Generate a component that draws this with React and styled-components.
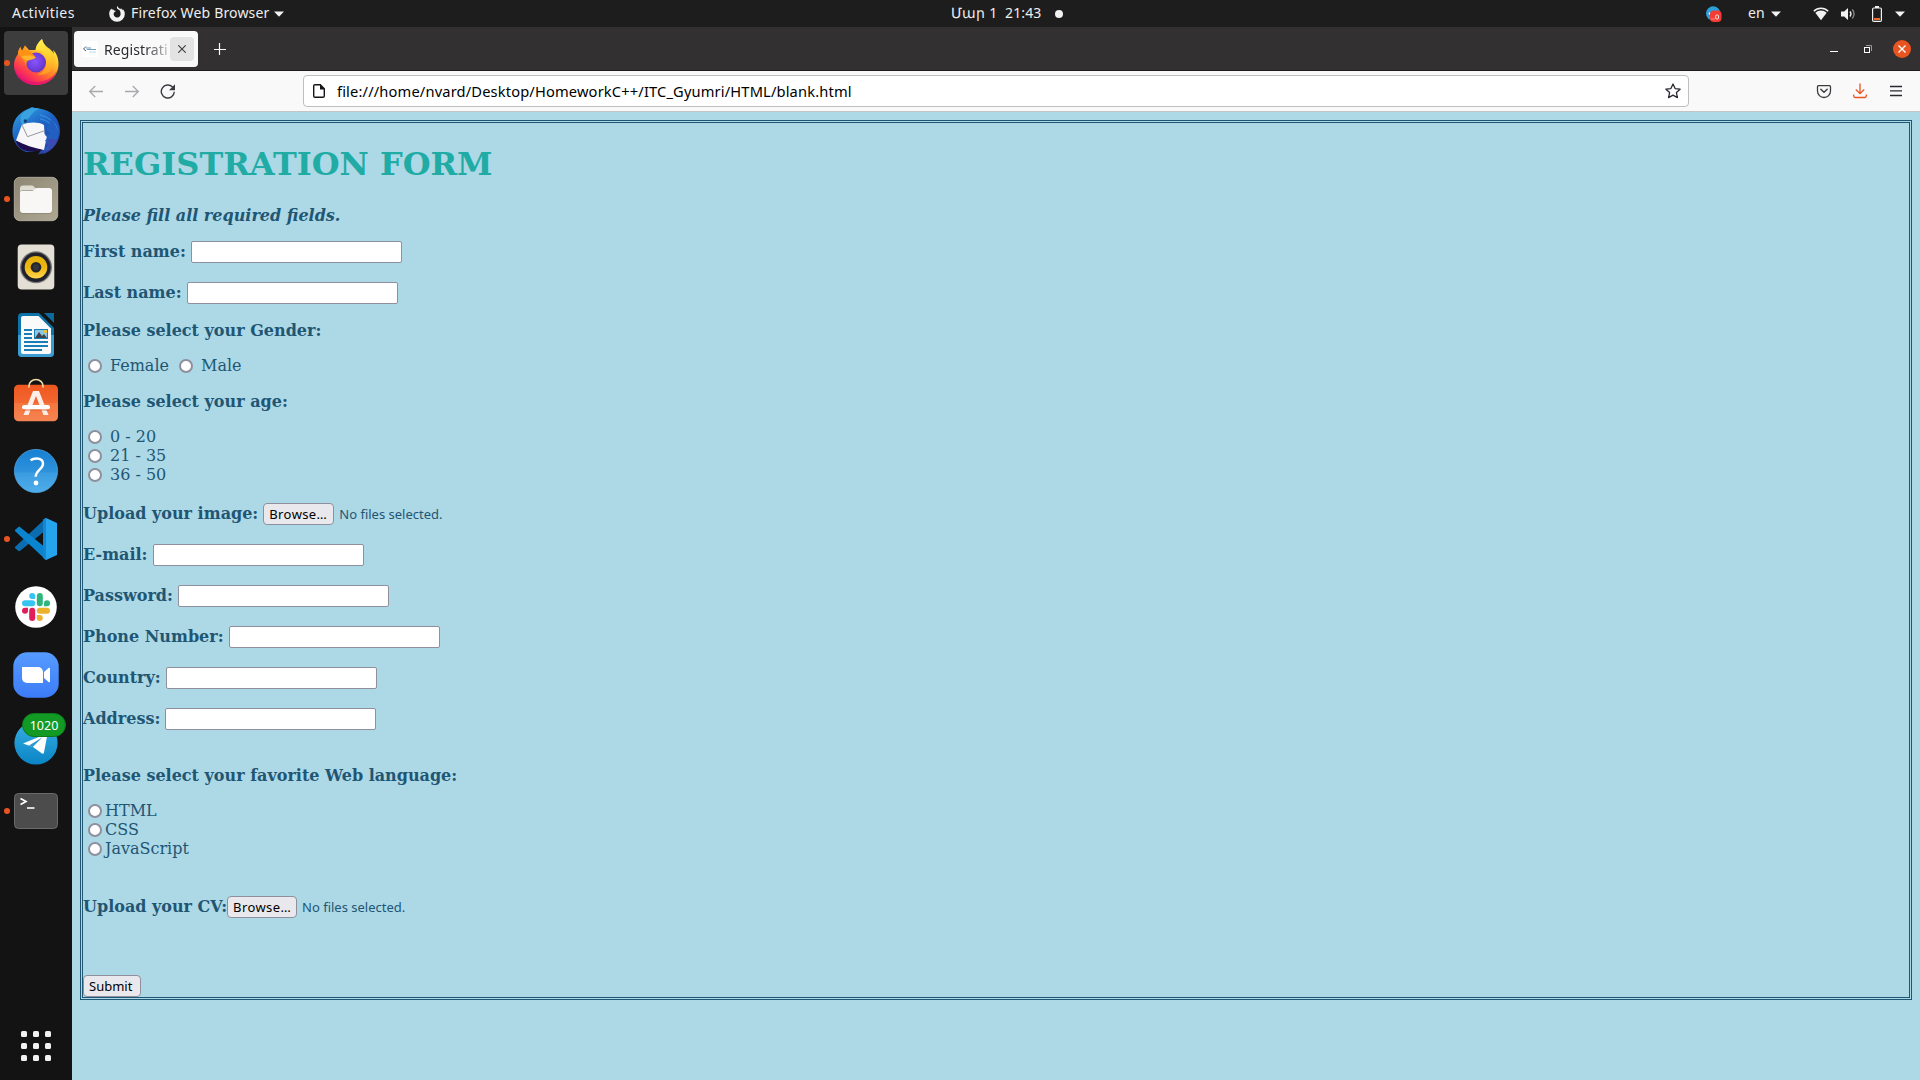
import React from "react";
import styled, { createGlobalStyle } from "styled-components";

const ui = `"Noto Sans", "Open Sans", sans-serif`;
const serif = `"DejaVu Serif", serif`;
const ink = "#1f5673";

const Global = createGlobalStyle`
  *, *::before, *::after { box-sizing: border-box; }
  body { margin: 0; overflow: hidden; background: #add8e6; }
  svg { display: block; flex: none; }
`;

const Desktop = styled.div`
  width: 1920px;
  height: 1080px;
  display: flex;
  flex-direction: column;
  overflow: hidden;
  font-family: ${ui};
`;

const Label = styled.span`
  font-size: ${(p) => p.$size || 14}px;
  letter-spacing: ${(p) => p.$track || 0}px;
  color: ${(p) => p.$color || "#eeeeee"};
  line-height: 20px;
  white-space: pre;
`;

/* ---------- top panel ---------- */
const Panel = styled.header`
  height: 27px;
  flex: none;
  display: grid;
  grid-template-columns: 951px 1fr auto;
  align-items: center;
  background: #1d1d1d;
  ${Label} { padding-bottom: 1px; }
`;
const PanelLeft = styled.div`
  display: flex;
  align-items: center;
  padding-left: 12px;
`;
const ActivitiesSlot = styled.div`
  width: 97px;
  display: flex;
`;
const AppName = styled.div`
  width: 149px;
  padding-left: 6px;
  display: flex;
`;
const PanelClock = styled.div`
  display: flex;
  align-items: center;
`;
const ClockSlot = styled.div`
  width: 104px;
  display: flex;
`;
const NoticeDot = styled.i`
  width: 8px;
  height: 8px;
  border-radius: 50%;
  background: #f2f2f2;
`;
const PanelRight = styled.div`
  display: flex;
  align-items: center;
  padding-right: 15px;
`;
const LangSlot = styled.div`
  width: 23px;
  margin-left: 26px;
  display: flex;
`;
const Slot = styled.div`
  margin-left: ${(p) => p.$left}px;
`;

/* ---------- dock ---------- */
const Workspace = styled.div`
  flex: 1;
  min-height: 0;
  display: flex;
`;
const Dock = styled.nav`
  width: 72px;
  flex: none;
  padding: 4px 4px 2px;
  display: flex;
  flex-direction: column;
  gap: 4px;
  background: #131313;
`;
const DockItem = styled.div`
  position: relative;
  height: 64px;
  display: flex;
  align-items: center;
  justify-content: center;
  border-radius: 4px;
  background: ${(p) => (p.$active ? "#3d3d3d" : "transparent")};
  margin-top: ${(p) => (p.$last ? "auto" : 0)};
  svg { overflow: visible; }
`;
const RunningDot = styled.i`
  position: absolute;
  left: 0;
  top: 29px;
  width: 6px;
  height: 6px;
  border-radius: 50%;
  background: #e95420;
`;
const Badge = styled.span`
  position: absolute;
  left: 18px;
  top: 2px;
  width: 44px;
  height: 24px;
  border-radius: 12px;
  background: #129a24;
  border: 1px solid #0c7a1a;
  color: #fff;
  font-size: 12.5px;
  line-height: 23px;
  text-align: center;
`;

/* ---------- browser window ---------- */
const Browser = styled.main`
  flex: 1;
  min-width: 0;
  display: flex;
  flex-direction: column;
`;
const TabStrip = styled.div`
  height: 44px;
  flex: none;
  display: flex;
  align-items: flex-start;
  padding: 4px 9px 0 2px;
  background: #323031;
  border-bottom: 1px solid #1c1b1c;
`;
const Tab = styled.div`
  width: 124px;
  height: 36px;
  padding: 0 4px 0 8px;
  display: flex;
  align-items: center;
  border-radius: 4px;
  background: #f9f9fa;
`;
const TabTitle = styled.div`
  width: 66px;
  margin-left: 6px;
  margin-top: 1px;
  display: flex;
  mask-image: linear-gradient(to right, #000 40px, transparent 72px);
`;
const TabClose = styled.button`
  width: 24px;
  height: 24px;
  padding: 0;
  border: 0;
  border-radius: 4px;
  display: grid;
  place-items: center;
  background: #e3e3e4;
`;
const NewTab = styled.div`
  margin: 12px auto 0 16px;
`;
const WindowControls = styled.div`
  height: 36px;
  display: flex;
  align-items: center;
`;
const Toolbar = styled.div`
  height: 41px;
  flex: none;
  display: flex;
  align-items: center;
  background: #f9f9fa;
  border-bottom: 1px solid #c4c4c6;
  padding: 0 16px;
`;
const NavButtons = styled.div`
  width: 215px;
  display: flex;
  align-items: center;
  gap: 20px;
`;
const UrlBar = styled.div`
  width: 1386px;
  height: 32px;
  display: flex;
  align-items: center;
  padding: 0 7px 0 7px;
  background: #fff;
  border: 1px solid #bebec0;
  border-radius: 4px;
`;
const UrlText = styled.div`
  flex: 1;
  display: flex;
  padding-left: 10px;
`;
const ToolActions = styled.div`
  margin-left: auto;
  display: flex;
  align-items: center;
  gap: 20px;
`;

/* ---------- page ---------- */
const Page = styled.section`
  flex: 1;
  padding: 10px;
  background: #add8e6;
`;
const Form = styled.form`
  height: 876px;
  display: flex;
  flex-direction: column;
  align-items: flex-start;
  border: 1px solid ${ink};
  outline: 1px solid ${ink};
  outline-offset: 1px;
  color: ${ink};
  font: 16px/19px ${serif};
`;
const Title = styled.h1`
  margin: 22px 0 0;
  font-size: 32px;
  line-height: 38px;
  color: #20aca5;
`;
const Note = styled.p`
  margin: 23px 0 0;
  font-weight: bold;
  font-style: italic;
`;
const Question = styled.p`
  margin: ${(p) => p.$top || 17}px 0 0;
  font-weight: bold;
`;
const Field = styled.label`
  display: flex;
  align-items: flex-start;
  height: 22px;
  margin-top: ${(p) => p.$top || 19}px;
`;
const FieldName = styled.span`
  margin: 1px ${(p) => (p.$tight ? 0 : 5)}px 0 0;
  font-weight: bold;
  white-space: nowrap;
`;
const TextBox = styled.input`
  width: 211px;
  height: 22px;
  margin: 0;
  border: 1px solid #8f8f9d;
  border-radius: 2px;
  background: #fff;
`;
const PushButton = styled.button`
  width: ${(p) => p.$width}px;
  height: 22px;
  margin: ${(p) => p.$top || 0}px 0 0;
  padding: 0 0 0 5px;
  text-align: left;
  border: 1px solid #8f8f9d;
  border-radius: 4px;
  background: #e9e9ed;
  color: #000;
  font: 13px/20px ${ui};
  letter-spacing: ${(p) => p.$track || 0}px;
  white-space: nowrap;
`;
const FileState = styled.span`
  margin-left: 5px;
  font: 13px/22px ${ui};
`;
const Options = styled.div`
  margin-top: 16px;
  display: flex;
  flex-direction: ${(p) => (p.$inline ? "row" : "column")};
  gap: ${(p) => (p.$inline ? 5 : 0)}px;
`;
const Option = styled.label`
  display: flex;
  height: 19px;
  gap: ${(p) => (p.$tight ? 3 : 8)}px;
`;
const Radio = styled.input`
  appearance: none;
  width: 14px;
  height: 14px;
  margin: 3px 0 0 5px;
  border: 2px solid #8f8f9d;
  border-radius: 50%;
  background: #fff;
`;

/* ---------- icons ---------- */
const Caret = () => (
  <svg width="10" height="6" viewBox="0 0 10 6"><path d="M0 0.5h10L5 5.7z" fill="#f2f2f2" /></svg>
);
const Icon48 = ({ children }) => <svg width="48" height="48" viewBox="0 0 48 48">{children}</svg>;

const FirefoxIcon = () => (
  <Icon48>
    <defs>
      <linearGradient id="ffBody" x1="0.85" y1="0.1" x2="0.25" y2="0.95">
        <stop offset="0" stopColor="#fff44f" /><stop offset="0.3" stopColor="#ffc02b" />
        <stop offset="0.55" stopColor="#ff8027" /><stop offset="0.8" stopColor="#ff3b4f" /><stop offset="1" stopColor="#e4127a" />
      </linearGradient>
      <radialGradient id="ffCore" cx="0.45" cy="0.45" r="0.6">
        <stop offset="0" stopColor="#8a55fb" /><stop offset="0.6" stopColor="#7040e0" /><stop offset="1" stopColor="#6a2fb4" />
      </radialGradient>
      <linearGradient id="ffFlame" x1="0.4" y1="0" x2="0.6" y2="1">
        <stop offset="0" stopColor="#fff44f" /><stop offset="0.5" stopColor="#ffd02f" /><stop offset="1" stopColor="#ff9a1f" />
      </linearGradient>
    </defs>
    <path d="M30 0c-4 3-6 7-6.500 11H17l-4-4.500L10 12 8.300 8C7 10 6 13 6 15c-2.500 3-4 7-4 11 0 11.500 9.500 20 22 20s22.500-9 22.500-21c0-6-2-11-5.500-14l1 4c-2-3-4-4-6.500-6C33 6.500 31 4 30 0z" fill="url(#ffBody)" />
    <circle cx="24" cy="23.500" r="10" fill="url(#ffCore)" />
    <path d="M30 0c-4 4-7 8-6 12 3-1 6 0 8 1.500l-2 .5c3 2 4.500 5 4.500 9 0 7-4 11-9 12.500 11 2 18-6 16-17 1.500 1 2 3 2.200 5C43 15 40 11 36.500 9 33 6.500 31 4.500 30 0z" fill="url(#ffFlame)" opacity=".85" />
    <path d="M13 6.500 12.500 11l5 1c3 2 5 5 6 6-1 2-4 2.500-7 3-2 2-2.500 3-2 6-2-4-4-9-8.500-12 0-3 1-5 2.300-7L10 12z" fill="#ff9215" />
    <path d="M9 18c5-2 10-2 15 .5-2 1.800-5 1.800-7.500 3-3 0-5-2-7.500-3.500z" fill="#ffb52c" />
    <path d="M3 31c4 8 11 12 21 12 9 0 17-4 20.500-11C42 41 34 46 24 46 14 46 6 40 3 31z" fill="#e3136f" opacity=".75" />
  </Icon48>
);
const ThunderbirdIcon = () => (
  <Icon48>
    <defs>
      <linearGradient id="tbBody" x1="0.2" y1="0" x2="0.8" y2="1">
        <stop offset="0" stopColor="#2f9fe0" /><stop offset="0.45" stopColor="#1d5fc4" /><stop offset="1" stopColor="#2c3f9e" />
      </linearGradient>
    </defs>
    <path d="M20 0c2 1 4 1.200 7 1.500C40 3 48 12 48 24c0 11-7 20-18 23.500l2-1.500-6 1.500 3-4L14 45C8 43 4 38 2 33-1.500 23 1 12 9 6 12 3.500 16 2 20 0z" fill="url(#tbBody)" />
    <path d="M3.500 33c8 3 16 6 28 9l-3 2-13 0C9 43 5 39 3.500 33z" fill="#1f0c4d" />
    <path d="M10 17.500c7-2.500 16-3 22 .5l.5 9 2.500 2-3 14C22 41 12 38 4 33.500z" fill="#f7f7f9" />
    <path d="M10 18l5.500 11.700L33 23.500" fill="none" stroke="#8c8c92" strokeWidth=".9" />
    <path d="M10 7c6-6 12-7 18-5-3 0-6 2-9 6-2 4-5 4-8 10-3-2-3-8-1-11z" fill="#3aa2df" />
    <circle cx="13.300" cy="14" r="1.700" fill="#124078" />
    <path d="M28 12c8 1 14 7 15 14M28 8c9 2 16 8 18 16" fill="none" stroke="#3d9ae4" strokeWidth="1.600" opacity=".6" />
    <path d="M34 22l4 5-5 1 4 4-4 1 3 5-4 6c8-3 14-10 15-19L40 12z" fill="#215fc0" />
    <path d="M37 32l-3 4h4l-4 4 5-1-7 6c8-2 12-7 13-13z" fill="#3c4bb4" />
  </Icon48>
);
const FilesIcon = () => (
  <Icon48>
    <defs><linearGradient id="fm" x1="0" y1="0" x2="1" y2="1"><stop offset="0" stopColor="#8d8672" /><stop offset=".5" stopColor="#9d9783" /><stop offset="1" stopColor="#aea893" /></linearGradient></defs>
    <rect x="2.300" y="2.300" width="43.400" height="43.400" rx="5.500" fill="url(#fm)" stroke="#bdb8a8" strokeWidth=".8" />
    <path d="M8 13.500a3 3 0 0 1 3-3h9c2 0 2.500 3 4.500 3h12l-10 5H8z" fill="#dfdcd1" />
    <rect x="8" y="15" width="32" height="24" rx="3" fill="#7b7564" opacity=".5" />
    <path d="M8 18c0-1.500 1-2 2.500-2H20c2 0 3-3 5-3h12a3 3 0 0 1 3 3v19a3 3 0 0 1-3 3H11a3 3 0 0 1-3-3z" fill="#f8f7f5" />
  </Icon48>
);
const RhythmboxIcon = () => (
  <Icon48>
    <defs><linearGradient id="rb" x1="0" y1="0" x2="0" y2="1"><stop offset="0" stopColor="#e3b10c" /><stop offset=".5" stopColor="#eeb710" /><stop offset="1" stopColor="#ffd64e" /></linearGradient></defs>
    <rect x="5.700" y="1.500" width="36.600" height="45" rx="4" fill="#e4dfd5" />
    <circle cx="24" cy="24.300" r="16" fill="#7d7b79" />
    <circle cx="24" cy="24.300" r="14.700" fill="#20212b" />
    <circle cx="24" cy="24.300" r="11.300" fill="url(#rb)" />
    <circle cx="24" cy="24.300" r="5.300" fill="#24262a" />
    <circle cx="24" cy="24.300" r="3" fill="#33363b" />
  </Icon48>
);
const WriterIcon = () => (
  <Icon48>
    <path d="M10 2h17l15 15v25a4 4 0 0 1-4 4H10a4 4 0 0 1-4-4V6a4 4 0 0 1 4-4z" fill="#0d73a9" />
    <path d="M6 24h36v18a4 4 0 0 1-4 4H10a4 4 0 0 1-4-4z" fill="#3c9bd0" />
    <path d="M32 2h10v10z" fill="#0c699b" />
    <path d="M11 5h15.500L39 17.500V41a2 2 0 0 1-2 2H11a2 2 0 0 1-2-2V7a2 2 0 0 1 2-2z" fill="#fafafa" />
    <path d="M12 19h8M12 23h8M12 27h8M12 31h24M12 35h24M12 39h18" stroke="#187eb5" strokeWidth="2" />
    <rect x="22.500" y="18.500" width="13" height="9" fill="#8ec5e4" stroke="#187eb5" />
    <path d="M23 27l4-6 3 4 2-2 3 4z" fill="#3e4347" /><circle cx="33.500" cy="20.500" r="1.700" fill="#f2c51d" />
  </Icon48>
);
const SoftwareIcon = () => (
  <Icon48>
    <defs><linearGradient id="sw" x1="0" y1="0" x2="0" y2="1"><stop offset="0" stopColor="#ee571f" /><stop offset=".49" stopColor="#f26730" /><stop offset=".5" stopColor="#f5753d" /><stop offset="1" stopColor="#f58452" /></linearGradient></defs>
    <rect x="2" y="5.700" width="44" height="36.600" rx="4.500" fill="url(#sw)" />
    <path d="M17 8V7a7 6.500 0 0 1 14 0v1" fill="none" stroke="#f4dcaa" strokeWidth="1.600" strokeLinecap="round" />
    <path d="M21 12h6l9.500 24h-5L24 17l-7.500 19h-5z" fill="#fbeee8" />
    <rect x="10" y="26" width="28" height="4.500" rx="2.200" fill="#fff" />
    <path d="M11 31h26" stroke="#dd5420" strokeWidth=".8" />
  </Icon48>
);
const HelpIcon = () => (
  <Icon48>
    <defs><linearGradient id="hp" x1="0" y1="0" x2="0" y2="1"><stop offset="0" stopColor="#1780d3" /><stop offset=".53" stopColor="#2f92dc" /><stop offset=".54" stopColor="#3a9ce1" /><stop offset="1" stopColor="#4fade9" /></linearGradient></defs>
    <circle cx="24" cy="24" r="21.600" fill="url(#hp)" stroke="#4ba4e2" strokeWidth=".8" />
    <path d="M18.500 13.300c2-1.500 4-1.800 6-1.800 4 0 6.500 2 6.500 5.300 0 5.700-7.300 6.200-7.300 13" fill="none" stroke="#fff" strokeWidth="2.400" />
    <circle cx="24" cy="36" r="2.400" fill="#fff" />
  </Icon48>
);
const CodeIcon = () => (
  <Icon48>
    <path d="M34 3 3.500 31.500c-.7.700-.7 1.500 0 2l2.700 2.300c.7.500 1.400.5 2 0L34 15z" fill="#0b6db0" />
    <path d="M34 45 3.500 16.500c-.7-.7-.7-1.500 0-2l2.700-2.300c.7-.5 1.400-.5 2 0L34 33z" fill="#0a84cf" />
    <path d="M33.500 2.800 45 8v32l-11.500 5.200z" fill="#25a5ee" />
    <path d="M31 4.500 34 2.800V45.200L31 43V8z" fill="#1587d2" />
  </Icon48>
);
const SlackIcon = () => (
  <Icon48>
    <circle cx="24" cy="24" r="20.800" fill="#fff" />
    <g fill="#36c5f0"><path d="M20.200 10a3 3 0 0 1 3 3v3h-3a3 3 0 0 1 0-6z" /><rect x="10" y="17.200" width="13.200" height="6" rx="3" /></g>
    <g fill="#2eb67d"><path d="M38 20.200a3 3 0 0 1-3 3h-3v-3a3 3 0 0 1 6 0z" /><rect x="24.800" y="10" width="6" height="13.200" rx="3" /></g>
    <g fill="#ecb22e"><path d="M27.800 38a3 3 0 0 1-3-3v-3h3a3 3 0 0 1 0 6z" /><rect x="24.800" y="24.800" width="13.200" height="6" rx="3" /></g>
    <g fill="#e01e5a"><path d="M10 27.800a3 3 0 0 1 3-3h3v3a3 3 0 0 1-6 0z" /><rect x="17.200" y="24.800" width="6" height="13.200" rx="3" /></g>
  </Icon48>
);
const ZoomIcon = () => (
  <Icon48>
    <defs><linearGradient id="zm" x1="0" y1="0" x2="0" y2="1"><stop offset="0" stopColor="#569bff" /><stop offset="1" stopColor="#3c7cf8" /></linearGradient></defs>
    <rect x="1.300" y="1.300" width="45.400" height="45.400" rx="14" fill="url(#zm)" />
    <path d="M10 16h16a5 5 0 0 1 5 5v11H15a5 5 0 0 1-5-5z" fill="#fff" />
    <path d="M32 21l4.500-4c.8-.6 1.500-.4 1.500.7v12.600c0 1.100-.7 1.300-1.500.7L32 27z" fill="#fff" />
  </Icon48>
);
const TelegramIcon = () => (
  <Icon48>
    <defs><linearGradient id="tg" x1="0" y1="0" x2="0" y2="1"><stop offset="0" stopColor="#37aee2" /><stop offset="1" stopColor="#0b84c6" /></linearGradient></defs>
    <circle cx="24" cy="24" r="21.600" fill="url(#tg)" />
    <path d="M11 24.500 34 15c1-.4 1.500 0 1.200 1.500L32 33.500c-.3 1.300-1 1.600-2 1l-9-6.500-4.500-1.500z" fill="#fff" />
    <path d="M17 26.500l13.500-8.300-10 10z" fill="#2b9bd4" />
  </Icon48>
);
const TerminalIcon = () => (
  <Icon48>
    <rect x="2.500" y="6.500" width="43" height="35" rx="4" fill="#4c4c4c" stroke="#6a6a6a" />
    <path d="M8.500 11.500l5.500 3-5.500 3" fill="none" stroke="#fff" strokeWidth="1.700" />
    <path d="M15 21h7.500" stroke="#fff" strokeWidth="1.600" />
  </Icon48>
);
const AppsIcon = () => (
  <svg width="30" height="30" viewBox="0 0 30 30" fill="#f2f2f2">
    {[0, 12, 24].map((y) => [0, 12, 24].map((x) => <rect key={`${x}-${y}`} x={x} y={y} width="6" height="6" rx="1.500" />))}
  </svg>
);

const dock = [
  { Icon: FirefoxIcon, running: true, active: true },
  { Icon: ThunderbirdIcon },
  { Icon: FilesIcon, running: true },
  { Icon: RhythmboxIcon },
  { Icon: WriterIcon },
  { Icon: SoftwareIcon },
  { Icon: HelpIcon },
  { Icon: CodeIcon, running: true },
  { Icon: SlackIcon },
  { Icon: ZoomIcon },
  { Icon: TelegramIcon, badge: "1020" },
  { Icon: TerminalIcon, running: true },
];

const TopPanel = () => (
  <Panel>
    <PanelLeft>
      <ActivitiesSlot><Label $track={0.45}>Activities</Label></ActivitiesSlot>
      <svg width="16" height="16" viewBox="0 0 16 16">
        <path d="M8.500 0c-.8 1-.8 2 0 3 2 .7 3 2 3 4A3.500 3.500 0 1 1 5 6.500L7 5 5 4.500 4 3 3 4 2.500 2.500C.8 4 .2 6 .2 8a7.800 7.800 0 0 0 15.600 0c0-2-.6-3.500-2-5l-.3 1.500L12 2l-.5 1.200C10 2.500 9 1.500 8.500 0z" fill="#f2f2f2" />
      </svg>
      <AppName><Label $track={0.16}>Firefox Web Browser</Label></AppName>
      <Caret />
    </PanelLeft>
    <PanelClock>
      <ClockSlot><Label $track={0.15}>{"Մար 1  21:43"}</Label></ClockSlot>
      <NoticeDot />
    </PanelClock>
    <PanelRight>
      <svg width="16" height="16" viewBox="0 0 16 16">
        <circle cx="7.200" cy="7.500" r="7.200" fill="#2ca0da" />
        <circle cx="3.500" cy="7.500" r=".9" fill="#fff" />
        <rect x="4" y="4.500" width="11.500" height="11.500" rx="4" fill="#f23c34" />
        <path d="M5.500 13h1M7.500 13h1" stroke="#fff" strokeWidth=".8" />
        <rect x="9.700" y="9" width="2.800" height="4" rx="1" fill="none" stroke="#fff" strokeWidth=".8" />
      </svg>
      <LangSlot><Label>en</Label></LangSlot>
      <Caret />
      <Slot $left={32}>
        <svg width="16" height="14" viewBox="0 0 16 14">
          <path d="M.8 4.200a10.200 10.200 0 0 1 14.400 0" fill="none" stroke="#f2f2f2" strokeWidth="1.500" />
          <path d="M2.300 5.800a8.200 8.200 0 0 1 11.400 0L8 13.300z" fill="#f2f2f2" />
        </svg>
      </Slot>
      <Slot $left={12}>
        <svg width="16" height="14" viewBox="0 0 16 14">
          <path d="M0 4.500h3.200L7 1v12L3.200 9.500H0z" fill="#f2f2f2" />
          <path d="M9 4.500q2 2.500 0 5" fill="none" stroke="#f2f2f2" strokeWidth="1.300" />
          <path d="M11.300 2.500q3.600 4.500 0 9" fill="none" stroke="#8b8b8b" strokeWidth="1.300" />
        </svg>
      </Slot>
      <Slot $left={15}>
        <svg width="10" height="16" viewBox="0 0 10 16">
          <rect x=".6" y="2" width="8.800" height="13.400" rx="1.200" fill="none" stroke="#f2f2f2" strokeWidth="1.200" />
          <rect x="3" y="0" width="4" height="2" fill="#f2f2f2" /><rect x="2" y="12" width="6" height="2" fill="#f06a2c" />
        </svg>
      </Slot>
      <Slot $left={13}><Caret /></Slot>
    </PanelRight>
  </Panel>
);

const FilePick = ({ name, tight }) => (
  <>
    <FieldName $tight={tight}>{name}</FieldName>
    <PushButton type="button" $width={tight ? 70 : 71} $track={0.4}>Browse…</PushButton>
    <FileState>No files selected.</FileState>
  </>
);
const TextField = ({ name, top, type = "text" }) => (
  <Field $top={top}>
    <FieldName>{name}</FieldName>
    <TextBox type={type} />
  </Field>
);
const RadioGroup = ({ name, items, inline, tight }) => (
  <Options $inline={inline}>
    {items.map((item) => (
      <Option key={item} $tight={tight}>
        <Radio type="radio" name={name} />
        {item}
      </Option>
    ))}
  </Options>
);

export default function App() {
  return (
    <Desktop>
      <Global />
      <TopPanel />
      <Workspace>
        <Dock>
          {dock.map(({ Icon, running, active, badge }, i) => (
            <DockItem key={i} $active={active}>
              <Icon />
              {running && <RunningDot />}
              {badge && <Badge>{badge}</Badge>}
            </DockItem>
          ))}
          <DockItem $last><AppsIcon /></DockItem>
        </Dock>
        <Browser>
          <TabStrip>
            <Tab>
              <svg width="16" height="16" viewBox="0 0 16 16">
                <rect width="16" height="16" fill="#fff" />
                <path d="M4 5.500 1.500 8 4 10" fill="none" stroke="#3f5f78" />
                <path d="M4 7h5M5 8.500h9" stroke="#6c9cc0" strokeWidth="1.100" /><path d="M7 11h7" stroke="#c6d8e6" />
              </svg>
              <TabTitle><Label $track={0.1} $color="#2b2b30">Registrati</Label></TabTitle>
              <TabClose type="button">
                <svg width="8" height="8" viewBox="0 0 8 8"><path d="M.3.3l7.400 7.400M7.700.3L.3 7.700" stroke="#3c3c40" strokeWidth="1.100" /></svg>
              </TabClose>
            </Tab>
            <NewTab>
              <svg width="12" height="12" viewBox="0 0 12 12"><path d="M5.500 0v12M0 6.500h12" stroke="#fbfbfe" strokeWidth="1.200" /></svg>
            </NewTab>
            <WindowControls>
              <svg width="8" height="8" viewBox="0 0 8 8"><path d="M0 6.500h8" stroke="#fff" /></svg>
              <Slot $left={26}>
                <svg width="8" height="8" viewBox="0 0 8 8"><path d="M2 .5h5.500V6" fill="none" stroke="#9a999a" /><rect x=".5" y="2.500" width="5" height="5" fill="none" stroke="#fff" /></svg>
              </Slot>
              <Slot $left={21}>
                <svg width="18" height="18" viewBox="0 0 18 18"><circle cx="9" cy="9" r="9" fill="#e95420" /><path d="M5.500 5.500l7 7M12.500 5.500l-7 7" stroke="#fff" strokeWidth="1.400" /></svg>
              </Slot>
            </WindowControls>
          </TabStrip>
          <Toolbar>
            <NavButtons>
              <svg width="16" height="16" viewBox="0 0 16 16"><path d="M15 8.500H1.800M7.200 3 1.700 8.500l5.500 5.500" fill="none" stroke="#a9a9ac" strokeWidth="1.300" /></svg>
              <svg width="16" height="16" viewBox="0 0 16 16"><path d="M1 8.500h13.200M8.800 3l5.500 5.500L8.800 14" fill="none" stroke="#a9a9ac" strokeWidth="1.300" /></svg>
              <svg width="16" height="16" viewBox="0 0 16 16"><path d="M14.300 8.800A6.500 6.500 0 1 1 12.500 4L14 5.800" fill="none" stroke="#3c3c40" strokeWidth="1.400" /><path d="M15 1.300v6H9z" fill="#3c3c40" /></svg>
            </NavButtons>
            <UrlBar>
              <svg width="16" height="16" viewBox="0 0 16 16"><path d="M4 1.700h5.300l4 4V13a1.300 1.300 0 0 1-1.300 1.300H4A1.300 1.300 0 0 1 2.700 13V3A1.300 1.300 0 0 1 4 1.700z" fill="none" stroke="#15141a" strokeWidth="1.400" /><path d="M9 1.500v5h5z" fill="#15141a" /></svg>
              <UrlText><Label $size={14.67} $track={0.15} $color="#000">file:///home/nvard/Desktop/HomeworkC++/ITC_Gyumri/HTML/blank.html</Label></UrlText>
              <svg width="16" height="16" viewBox="0 0 16 16"><path d="M8 1l2.100 4.600 5 .6-3.700 3.400 1 5L8 12.100l-4.400 2.500 1-5L.9 6.200l5-.6z" fill="none" stroke="#2b2a33" strokeWidth="1.300" strokeLinejoin="round" /></svg>
            </UrlBar>
            <ToolActions>
              <svg width="16" height="16" viewBox="0 0 16 16"><path d="M2.500 2.700h11a1 1 0 0 1 1 1V8a6.500 6.500 0 0 1-13 0V3.700a1 1 0 0 1 1-1z" fill="none" stroke="#3c3c40" strokeWidth="1.300" /><path d="M4.800 6.300 8 9.300l3.200-3" fill="none" stroke="#3c3c40" strokeWidth="1.400" strokeLinecap="round" /></svg>
              <svg width="16" height="16" viewBox="0 0 16 16"><path d="M8 .5v10M3.800 6.500 8 10.700l4.200-4.200M1.700 11.500V13a1.500 1.500 0 0 0 1.500 1.500h9.600a1.500 1.500 0 0 0 1.500-1.500v-1.500" fill="none" stroke="#e95420" strokeWidth="1.300" /></svg>
              <svg width="16" height="16" viewBox="0 0 16 16"><path d="M2 3.500h12M2 7.800h12M2 12.500h12" stroke="#2b2b2f" strokeWidth="1.300" /></svg>
            </ToolActions>
          </Toolbar>
          <Page>
            <Form>
              <Title>REGISTRATION FORM</Title>
              <Note>Please fill all required fields.</Note>
              <TextField name="First name:" top={16} />
              <TextField name="Last name:" />
              <Question>Please select your Gender:</Question>
              <RadioGroup name="gender" items={["Female", "Male"]} inline />
              <Question>Please select your age:</Question>
              <RadioGroup name="age" items={["0 - 20", "21 - 35", "36 - 50"]} />
              <Field as="div"><FilePick name="Upload your image:" /></Field>
              <TextField name="E-mail:" />
              <TextField name="Password:" type="password" />
              <TextField name="Phone Number:" />
              <TextField name="Country:" />
              <TextField name="Address:" />
              <Question $top={36}>Please select your favorite Web language:</Question>
              <RadioGroup name="language" items={["HTML", "CSS", "JavaScript"]} tight />
              <Field as="div" $top={38}><FilePick name="Upload your CV:" tight /></Field>
              <PushButton type="button" $width={58} $top={57}>Submit</PushButton>
            </Form>
          </Page>
        </Browser>
      </Workspace>
    </Desktop>
  );
}
